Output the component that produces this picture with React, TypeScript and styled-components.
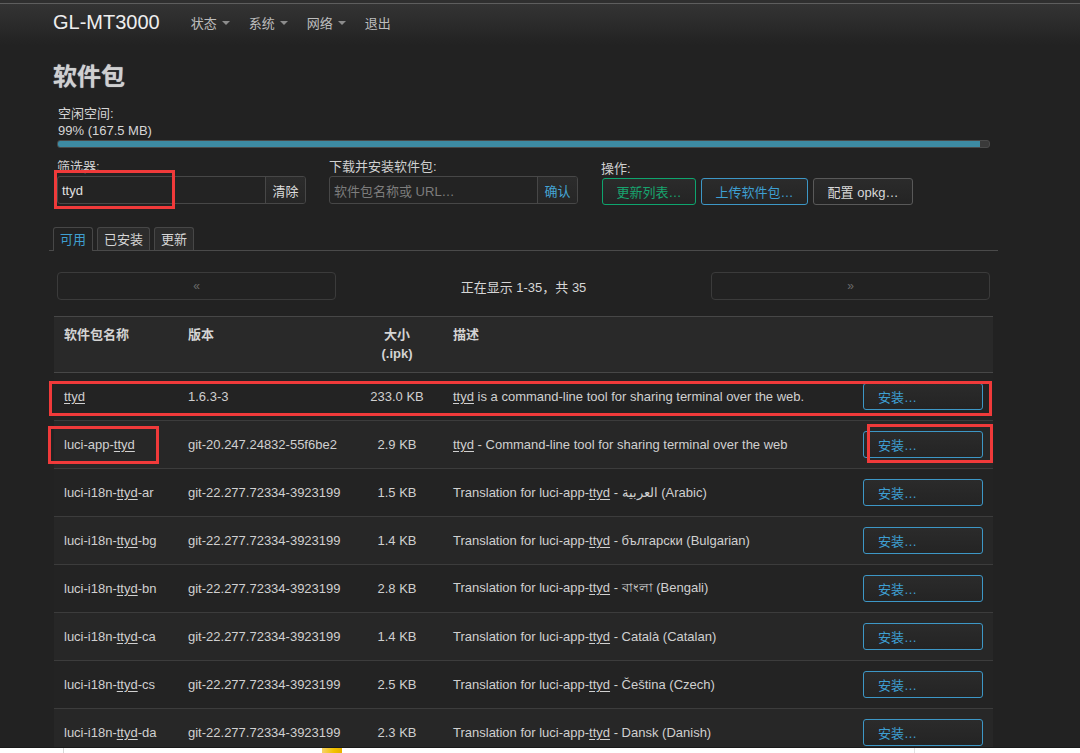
import React from "react";
import styled, { createGlobalStyle } from "styled-components";

const GlobalStyle = createGlobalStyle`
  html, body { margin: 0; padding: 0; background: #222222; }
  body {
    font-family: "Liberation Sans", Arial, "Noto Sans CJK SC", sans-serif;
    font-size: 13px;
    color: #cfcfcf;
  }
  * { box-sizing: border-box; }
`;

const Screen = styled.div`
  position: relative;
  width: 1080px;
  height: 753px;
  overflow: hidden;
  display: flex;
  flex-direction: column;
`;

const Main = styled.div`
  height: 748px;
  overflow: hidden;
  background: #222222;
  border-bottom: 1px solid #1a1a1a;
`;

const BottomStrip = styled.div`
  flex: 1;
  background: #ffffff;
  display: flex;
  align-items: stretch;
`;

const StripLine = styled.div`
  width: 1px;
  margin-left: 63px;
  background: #d8d8d8;
`;

const StripMark = styled.div`
  width: 20px;
  margin-left: 258px;
  background: linear-gradient(90deg, #f7d36a 0%, #f2c200 60%, #e8b000 100%);
`;

const StripLine2 = styled.div`
  width: 1px;
  margin-left: 572px;
  background: #e2e2e2;
`;

const Header = styled.header`
  height: 45px;
  border-top: 3px solid #2f2f2f;
  box-shadow: inset 0 1px 0 #5e5e5e;
  background: linear-gradient(#343434, #222222);
  display: flex;
  align-items: center;
  padding-left: 53px;
`;

const Brand = styled.div`
  font-size: 20px;
  color: #eeeeee;
  margin-right: 31px;
  margin-top: -3px;
`;

const Nav = styled.nav`
  display: flex;
  gap: 19px;
  margin-top: -3px;
`;

const NavItem = styled.span`
  font-size: 13px;
  color: #bdbdbd;
  display: flex;
  align-items: center;
  gap: 3px;
`;

const Caret = styled.span`
  width: 0;
  height: 0;
  border-left: 4px solid transparent;
  border-right: 4px solid transparent;
  border-top: 4px solid #8c8c8c;
  margin-left: 2px;
`;

const Container = styled.div`
  padding-left: 53px;
  width: 998px;
`;

const Title = styled.h2`
  margin: 17px 0 0 0;
  font-size: 24px;
  line-height: 30px;
  font-weight: bold;
  color: #d0d0d0;
  text-shadow: 0 0 1px #9ab;
`;

const Section = styled.div`
  padding-left: 4px;
`;

const InfoLine = styled.div`
  line-height: 17px;
  font-size: 13px;
  color: #d6d6d6;
  padding-left: 1px;
`;

const FreeBlock = styled.div`
  margin-top: 13px;
`;

const Progress = styled.div`
  margin-top: 1px;
  width: 933px;
  height: 8px;
  border: 1px solid #4a4a4a;
  border-radius: 3px;
  background: #3a3a3a;
  overflow: hidden;
`;

const ProgressFill = styled.div`
  height: 100%;
  background: #3d8ba3;
`;

const ControlsRow = styled.div`
  display: flex;
  margin-top: 10px;
  gap: 23px;
`;

const Field = styled.div<{ $shift?: number }>`
  display: flex;
  flex-direction: column;
  gap: 1px;
  padding-top: ${(p) => p.$shift || 0}px;
`;

const Label = styled.div`
  line-height: 17px;
  color: #d0d0d0;
`;

const InputGroup = styled.div`
  display: flex;
  width: 249px;
  height: 28px;
  border: 1px solid #474747;
  border-radius: 3px;
  background: #232323;
  overflow: hidden;
`;

const TextInput = styled.div<{ $placeholder?: boolean }>`
  flex: 1;
  padding-left: 4px;
  display: flex;
  align-items: center;
  color: ${(p) => (p.$placeholder ? "#7d7d7d" : "#e0e0e0")};
`;

const AddonButton = styled.div<{ $blue?: boolean }>`
  width: 40px;
  border-left: 1px solid #474747;
  background: linear-gradient(#2c2c2c, #262626);
  display: flex;
  align-items: center;
  justify-content: center;
  color: ${(p) => (p.$blue ? "#45a5d4" : "#dddddd")};
`;

const ActionButtons = styled.div`
  display: flex;
  gap: 5px;
  margin-left: 1px;
`;

const ActionButton = styled.div<{ $tone: "green" | "blue" | "gray"; $w: number }>`
  width: ${(p) => p.$w}px;
  height: 27px;
  border-radius: 3px;
  border: 1px solid
    ${(p) => (p.$tone === "green" ? "#0ea56e" : p.$tone === "blue" ? "#3d97c6" : "#595959")};
  color: ${(p) => (p.$tone === "green" ? "#18a46f" : p.$tone === "blue" ? "#3e9fd2" : "#d8d8d8")};
  background: linear-gradient(#2b2b2b, #242424);
  display: flex;
  align-items: center;
  justify-content: center;
`;

const Tabs = styled.div`
  margin-top: 22px;
  margin-left: -4px;
  padding-left: 4px;
  width: 949px;
  display: flex;
  gap: 4px;
  border-bottom: 1px solid #4a4a4a;
`;

const Tab = styled.div<{ $active?: boolean }>`
  padding: 0 6px 2px 6px;
  display: flex;
  align-items: center;
  border: 1px solid #474747;
  border-bottom: none;
  border-radius: 3px 3px 0 0;
  background: ${(p) => (p.$active ? "#222222" : "#2c2c2c")};
  color: ${(p) => (p.$active ? "#3f9fd0" : "#d6d6d6")};
  margin-bottom: ${(p) => (p.$active ? "-1px" : "0")};
  height: ${(p) => (p.$active ? "24px" : "23px")};
`;

const Pager = styled.div`
  margin-top: 21px;
  margin-left: 4px;
  width: 933px;
  display: grid;
  grid-template-columns: 279px 1fr 279px;
  align-items: center;
`;

const PagerButton = styled.div`
  height: 28px;
  border: 1px solid #3b3b3b;
  border-radius: 4px;
  display: flex;
  align-items: center;
  justify-content: center;
  color: #6a6a6a;
  font-size: 12px;
`;

const PagerText = styled.div`
  text-align: center;
  color: #d6d6d6;
`;

const Table = styled.div`
  margin-top: 16px;
  margin-left: 1px;
  width: 939px;
  border-top: 1px solid #474747;
`;

const cols = "124px 178px 87px 410px 140px";

const HeadRow = styled.div`
  display: grid;
  grid-template-columns: ${cols};
  height: 56px;
  background: #292929;
  border-bottom: 1px solid #474747;
  font-weight: bold;
  padding-top: 8px;
`;

const HeadCell = styled.div<{ $center?: boolean }>`
  padding-left: ${(p) => (p.$center ? "0" : "10px")};
  padding-right: ${(p) => (p.$center ? "5px" : "0")};
  text-align: ${(p) => (p.$center ? "center" : "left")};
  line-height: 19px;
  color: #d4d4d4;
  font-size: 13px;
`;

const Row = styled.div<{ $alt?: boolean }>`
  display: grid;
  grid-template-columns: ${cols};
  height: 48px;
  align-items: center;
  background: ${(p) => (p.$alt ? "#272727" : "#232323")};
  border-bottom: 1px solid #3c3c3c;
`;

const Cell = styled.div<{ $center?: boolean }>`
  padding-left: ${(p) => (p.$center ? "0" : "10px")};
  padding-right: ${(p) => (p.$center ? "5px" : "0")};
  text-align: ${(p) => (p.$center ? "center" : "left")};
  color: #d0d0d0;
  white-space: nowrap;
  margin-top: -1px;
`;

const Link = styled.span`
  text-decoration: underline;
  text-underline-offset: 2px;
`;

const InstallButton = styled.div`
  width: 120px;
  height: 27px;
  border: 1px solid #3d97c6;
  border-radius: 3px;
  background: linear-gradient(#2b2b2b, #242424);
  color: #3e9fd2;
  display: flex;
  align-items: center;
  padding-left: 14px;
`;

const Annotation = styled.div<{ $x: number; $y: number; $w: number; $h: number }>`
  position: absolute;
  left: ${(p) => p.$x}px;
  top: ${(p) => p.$y}px;
  width: ${(p) => p.$w}px;
  height: ${(p) => p.$h}px;
  border: 3px solid #f03a3a;
  pointer-events: none;
`;

type Pkg = {
  pre: string;
  post: string;
  version: string;
  size: string;
  desc: React.ReactNode;
};

const tr = (lang: string) => (
  <>
    Translation for luci-app-<Link>ttyd</Link> - {lang}
  </>
);

const pkgs: Pkg[] = [
  {
    pre: "",
    post: "",
    version: "1.6.3-3",
    size: "233.0 KB",
    desc: (
      <>
        <Link>ttyd</Link> is a command-line tool for sharing terminal over the web.
      </>
    ),
  },
  {
    pre: "luci-app-",
    post: "",
    version: "git-20.247.24832-55f6be2",
    size: "2.9 KB",
    desc: (
      <>
        <Link>ttyd</Link> - Command-line tool for sharing terminal over the web
      </>
    ),
  },
  { pre: "luci-i18n-", post: "-ar", version: "git-22.277.72334-3923199", size: "1.5 KB", desc: tr("العربية (Arabic)") },
  { pre: "luci-i18n-", post: "-bg", version: "git-22.277.72334-3923199", size: "1.4 KB", desc: tr("български (Bulgarian)") },
  { pre: "luci-i18n-", post: "-bn", version: "git-22.277.72334-3923199", size: "2.8 KB", desc: tr("বাংলা (Bengali)") },
  { pre: "luci-i18n-", post: "-ca", version: "git-22.277.72334-3923199", size: "1.4 KB", desc: tr("Català (Catalan)") },
  { pre: "luci-i18n-", post: "-cs", version: "git-22.277.72334-3923199", size: "2.5 KB", desc: tr("Čeština (Czech)") },
  { pre: "luci-i18n-", post: "-da", version: "git-22.277.72334-3923199", size: "2.3 KB", desc: tr("Dansk (Danish)") },
];

export default function App() {
  return (
    <Screen>
      <GlobalStyle />
      <Main>
        <Header>
          <Brand>GL-MT3000</Brand>
          <Nav>
            <NavItem>
              状态<Caret />
            </NavItem>
            <NavItem>
              系统<Caret />
            </NavItem>
            <NavItem>
              网络<Caret />
            </NavItem>
            <NavItem>退出</NavItem>
          </Nav>
        </Header>
        <Container>
          <Title>软件包</Title>
          <Section>
            <FreeBlock>
              <InfoLine>空闲空间:</InfoLine>
              <InfoLine>99% (167.5 MB)</InfoLine>
              <Progress>
                <ProgressFill style={{ width: "99%" }} />
              </Progress>
            </FreeBlock>
            <ControlsRow>
              <Field>
                <Label>筛选器:</Label>
                <InputGroup>
                  <TextInput>ttyd</TextInput>
                  <AddonButton>清除</AddonButton>
                </InputGroup>
              </Field>
              <Field>
                <Label>下载并安装软件包:</Label>
                <InputGroup>
                  <TextInput $placeholder>软件包名称或 URL…</TextInput>
                  <AddonButton $blue>确认</AddonButton>
                </InputGroup>
              </Field>
              <Field $shift={2}>
                <Label>操作:</Label>
                <ActionButtons>
                  <ActionButton $tone="green" $w={94}>
                    更新列表…
                  </ActionButton>
                  <ActionButton $tone="blue" $w={107}>
                    上传软件包…
                  </ActionButton>
                  <ActionButton $tone="gray" $w={100}>
                    配置 opkg…
                  </ActionButton>
                </ActionButtons>
              </Field>
            </ControlsRow>
          </Section>
          <Tabs>
            <Tab $active>可用</Tab>
            <Tab>已安装</Tab>
            <Tab>更新</Tab>
          </Tabs>
          <Pager>
            <PagerButton>«</PagerButton>
            <PagerText>正在显示 1-35，共 35</PagerText>
            <PagerButton>»</PagerButton>
          </Pager>
          <Table>
            <HeadRow>
              <HeadCell>软件包名称</HeadCell>
              <HeadCell>版本</HeadCell>
              <HeadCell $center>
                大小
                <br />
                (.ipk)
              </HeadCell>
              <HeadCell>描述</HeadCell>
              <HeadCell />
            </HeadRow>
            {pkgs.map((p, i) => (
              <Row key={i} $alt={i % 2 === 1}>
                <Cell>
                  {p.pre}
                  <Link>ttyd</Link>
                  {p.post}
                </Cell>
                <Cell>{p.version}</Cell>
                <Cell $center>{p.size}</Cell>
                <Cell>{p.desc}</Cell>
                <Cell>
                  <InstallButton>安装…</InstallButton>
                </Cell>
              </Row>
            ))}
          </Table>
        </Container>
      </Main>
      <BottomStrip>
        <StripLine />
        <StripMark />
        <StripLine2 />
      </BottomStrip>
      <Annotation $x={54} $y={170} $w={121} $h={39} />
      <Annotation $x={49} $y={381} $w={943} $h={35} />
      <Annotation $x={48} $y={426} $w={111} $h={38} />
      <Annotation $x={867} $y={424} $w={126} $h={39} />
    </Screen>
  );
}
